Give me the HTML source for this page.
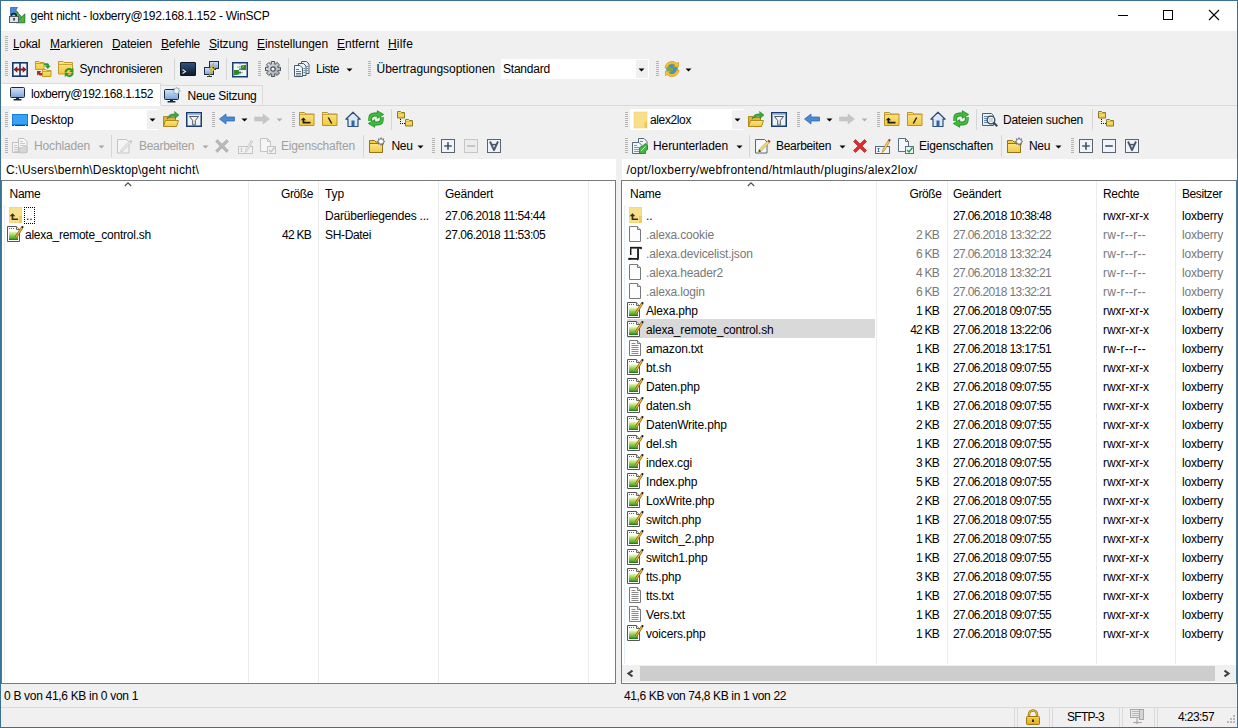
<!DOCTYPE html>
<html><head><meta charset="utf-8"><style>
html,body{margin:0;padding:0;}
body{width:1238px;height:728px;position:relative;overflow:hidden;background:#f0f0f0;font-family:"Liberation Sans",sans-serif;font-size:12px;color:#000;}
.t{position:absolute;white-space:nowrap;line-height:14px;}
svg{overflow:visible}
</style></head><body>
<svg width="0" height="0" style="position:absolute"><defs>
<linearGradient id="gfold" x1="0" y1="0" x2="0" y2="1"><stop offset="0" stop-color="#fbe58a"/><stop offset="1" stop-color="#f3c93c"/></linearGradient>
<linearGradient id="gcons" x1="0" y1="0" x2="0" y2="1"><stop offset="0" stop-color="#2f5580"/><stop offset="1" stop-color="#0d1826"/></linearGradient>
<linearGradient id="gscr" x1="0" y1="0" x2="0" y2="1"><stop offset="0" stop-color="#d6e6f8"/><stop offset="1" stop-color="#7aa4dc"/></linearGradient>
<linearGradient id="ggreen" x1="0" y1="0" x2="0" y2="1"><stop offset="0" stop-color="#c8e8a0"/><stop offset="0.45" stop-color="#7cc850"/><stop offset="1" stop-color="#1f8a1f"/></linearGradient>
<linearGradient id="ggear" x1="0" y1="0" x2="1" y2="1"><stop offset="0" stop-color="#e6e9ee"/><stop offset="1" stop-color="#9aa2ad"/></linearGradient>
<linearGradient id="glock" x1="0" y1="0" x2="0" y2="1"><stop offset="0" stop-color="#f8d860"/><stop offset="1" stop-color="#e0a820"/></linearGradient>
</defs></svg>
<div style="position:absolute;left:0px;top:0px;width:1238px;height:31px;background:#ffffff;"></div>
<svg style="position:absolute;left:9px;top:7px" width="16" height="16" viewBox="0 0 16 16"><path d="M1.5 0.5H8.5L6.8 3.2L9 5.5L6.5 8H1.5z" fill="#4a88e0" stroke="#2a5aa8" stroke-width="0.7"/><path d="M6 5.2L11.5 10.7" stroke="#1e7a1e" stroke-width="3.6"/><path d="M6 5.2L11.5 10.7" stroke="#4cbc4c" stroke-width="2.2"/><path d="M15.8 6.8V15.8H7.2z" fill="#46b446" stroke="#1e7a1e" stroke-width="0.9" stroke-linejoin="round"/><path d="M2.3 10.5V9a2.5 2.5 0 0 1 5 0v1.5" stroke="#0e2438" stroke-width="1.7" fill="none"/><rect x="0.5" y="9.5" width="9" height="6" fill="#dfe4ea" stroke="#555a60"/><rect x="4.3" y="11" width="1.5" height="2.5" fill="#222"/></svg>
<div class="t" style="left:30.50px;top:9.00px;letter-spacing:-0.257px;">geht nicht - loxberry@192.168.1.152 - WinSCP</div>
<div style="position:absolute;left:1118px;top:15px;width:10px;height:1px;background:#000;"></div>
<div style="position:absolute;left:1163px;top:10px;width:8px;height:8px;border:1px solid #000"></div>
<svg style="position:absolute;left:1209px;top:10px" width="10" height="10" viewBox="0 0 10 10"><path d="M0 0L10 10M10 0L0 10" stroke="#000" stroke-width="1.1"/></svg>
<div style="position:absolute;left:5px;top:36px;width:3px;height:15px;background:repeating-linear-gradient(#b4b4b4 0 1px,transparent 1px 2px)"></div>
<div class="t" style="left:13.00px;top:36.50px;letter-spacing:-0.338px;">Lokal</div>
<div style="position:absolute;left:13px;top:49px;width:6px;height:1px;background:#000;"></div>
<div class="t" style="left:50.00px;top:36.50px;letter-spacing:-0.039px;">Markieren</div>
<div style="position:absolute;left:50px;top:49px;width:10px;height:1px;background:#000;"></div>
<div class="t" style="left:112.00px;top:36.50px;letter-spacing:-0.194px;">Dateien</div>
<div style="position:absolute;left:112px;top:49px;width:8px;height:1px;background:#000;"></div>
<div class="t" style="left:161.00px;top:36.50px;letter-spacing:-0.243px;">Befehle</div>
<div style="position:absolute;left:161px;top:49px;width:8px;height:1px;background:#000;"></div>
<div class="t" style="left:209.00px;top:36.50px;letter-spacing:-0.146px;">Sitzung</div>
<div style="position:absolute;left:209px;top:49px;width:8px;height:1px;background:#000;"></div>
<div class="t" style="left:257.00px;top:36.50px;letter-spacing:-0.081px;">Einstellungen</div>
<div style="position:absolute;left:257px;top:49px;width:8px;height:1px;background:#000;"></div>
<div class="t" style="left:337.00px;top:36.50px;letter-spacing:-0.003px;">Entfernt</div>
<div style="position:absolute;left:337px;top:49px;width:8px;height:1px;background:#000;"></div>
<div class="t" style="left:388.00px;top:36.50px;letter-spacing:0.199px;">Hilfe</div>
<div style="position:absolute;left:388px;top:49px;width:9px;height:1px;background:#000;"></div>
<div style="position:absolute;left:5px;top:61px;width:3px;height:15px;background:repeating-linear-gradient(#b4b4b4 0 1px,transparent 1px 2px)"></div>
<svg style="position:absolute;left:12px;top:62px" width="16" height="16" viewBox="0 0 16 16"><rect x="0.8" y="0.8" width="14.4" height="13.4" fill="#eef4fb" stroke="#1a3866" stroke-width="1.6"/><rect x="7.2" y="0.5" width="1.6" height="14" fill="#1a3866"/><path d="M1.5 7.5l3.8-3.3v2.3h5.4V4.2l3.8 3.3-3.8 3.3V8.5H5.3v2.3z" fill="#8a1c1c"/></svg>
<svg style="position:absolute;left:35px;top:61px" width="16" height="16" viewBox="0 0 16 16"><path d="M0.5 0.5h3.5l1 1h4v7h-8.5z" fill="url(#gfold)" stroke="#c19a2a"/><path d="M0.5 2.5h8.5" stroke="#c9a43a"/><path d="M7.5 8.5h3.5l1 1h4v6h-8.5z" fill="url(#gfold)" stroke="#c19a2a"/><path d="M7.5 10.5h8.5" stroke="#c9a43a"/><path d="M9 2.2h3.2c1.2 0 1.8.6 1.8 1.8v.8h1.8l-3 3.2-3-3.2h1.8v-.6h-2.6z" fill="#2f9a2f"/><path d="M7 14.5H4.5L3.2 13.2 2 14.4V10h4.4L5 11.3l.8.8H7z" fill="#b3262a"/></svg>
<svg style="position:absolute;left:58px;top:61px" width="16" height="16" viewBox="0 0 16 16"><path d="M0.5 0.5h4.5l1 1h8.5v11.5h-14z" fill="url(#gfold)" stroke="#c19a2a"/><path d="M0.5 3.5h14" stroke="#c9a43a"/><path d="M6.5 11.5c0-2.6 2-4.5 4.6-4.5 1.3 0 2.3.5 3 1.2l1.4-1.4v4.2h-4.2l1.4-1.4c-.4-.4-1-.7-1.6-.7-1.4 0-2.4 1.1-2.4 2.6z" fill="#2f9a2f"/><path d="M15.8 11.5c0 2.6-2 4.5-4.6 4.5-1.3 0-2.3-.5-3-1.2l-1.4 1.4v-4.2h4.2l-1.4 1.4c.4.4 1 .7 1.6.7 1.4 0 2.4-1.1 2.4-2.6z" fill="#2f9a2f"/></svg>
<div class="t" style="left:79.50px;top:61.50px;letter-spacing:-0.203px;">Synchronisieren</div>
<div style="position:absolute;left:174px;top:58px;width:1px;height:22px;background:#d6d6d6;"></div>
<svg style="position:absolute;left:180px;top:61px" width="16" height="16" viewBox="0 0 16 16"><rect x="0.5" y="1.5" width="15" height="13" rx="0.5" fill="url(#gcons)" stroke="#0d1826"/><path d="M2.5 8.5l3 2-3 2" stroke="#e0e8f0" fill="none" stroke-width="1.1"/></svg>
<svg style="position:absolute;left:203px;top:61px" width="16" height="16" viewBox="0 0 16 16"><rect x="6.5" y="0.5" width="9" height="7" fill="url(#gscr)" stroke="#1f2f44"/><path d="M9 8.5h4" stroke="#1f2f44"/><rect x="1.5" y="6.5" width="9" height="7" fill="url(#gscr)" stroke="#1f2f44"/><path d="M4 15.5h5M6.5 13.5v2" stroke="#1f2f44"/><path d="M11 2l-5 6.5h3l-3.5 7 6.5-8h-3z" fill="#f7d23c" stroke="#b08a10" stroke-width="0.5"/></svg>
<div style="position:absolute;left:226px;top:58px;width:1px;height:22px;background:#d6d6d6;"></div>
<svg style="position:absolute;left:232px;top:62px" width="16" height="16" viewBox="0 0 16 16"><rect x="0.75" y="0.75" width="14.5" height="14" fill="#f2f7fb" stroke="#1b3c6e" stroke-width="1.5"/><path d="M8 1.5v13" stroke="#1b3c6e" stroke-dasharray="1 1.5" stroke-opacity="0.6"/><path d="M5 5h4" stroke="#9ab89a" stroke-width="1.2"/><path d="M9 3.5L14 2.8V8H9z" fill="#2c8a2c"/><path d="M9.5 6L12 4" stroke="#8ad08a" stroke-width="0.8"/><path d="M7 10.5h4" stroke="#9ab89a" stroke-width="1.2"/><path d="M2 8h5v4.5L2 13.2z" fill="#2c8a2c"/><rect x="7.5" y="6.5" width="1" height="1.5" fill="#0a1a2a"/><rect x="7.5" y="10" width="1" height="1.5" fill="#0a1a2a"/></svg>
<div style="position:absolute;left:258px;top:61px;width:3px;height:15px;background:repeating-linear-gradient(#b4b4b4 0 1px,transparent 1px 2px)"></div>
<svg style="position:absolute;left:265px;top:61px" width="16" height="16" viewBox="0 0 16 16"><path d="M6.24 3.32 L6.32 0.49 L9.68 0.49 L9.76 3.32 L10.06 3.45 L12.13 1.50 L14.50 3.87 L12.55 5.94 L12.68 6.24 L15.51 6.32 L15.51 9.68 L12.68 9.76 L12.55 10.06 L14.50 12.13 L12.13 14.50 L10.06 12.55 L9.76 12.68 L9.68 15.51 L6.32 15.51 L6.24 12.68 L5.94 12.55 L3.87 14.50 L1.50 12.13 L3.45 10.06 L3.32 9.76 L0.49 9.68 L0.49 6.32 L3.32 6.24 L3.45 5.94 L1.50 3.87 L3.87 1.50 L5.94 3.45Z" fill="url(#ggear)" stroke="#4a5058" stroke-width="1" stroke-linejoin="round"/><circle cx="8" cy="8" r="2.2" fill="#fafafa" stroke="#4a5058" stroke-width="1.2"/></svg>
<div style="position:absolute;left:288px;top:58px;width:1px;height:22px;background:#d6d6d6;"></div>
<svg style="position:absolute;left:294px;top:61px" width="16" height="16" viewBox="0 0 16 16"><path d="M7.5 0.5h5l2.5 2.5v9.5h-7.5z" fill="#e8f2fa" stroke="#4a5a6a"/><path d="M12.5 5.5h1.5M12.5 7.5h1.5M12.5 9.5h1.5" stroke="#6a8aa8"/><path d="M4.5 2.5h5l2.5 2.5v9.5h-7.5z" fill="#e8f2fa" stroke="#4a5a6a"/><path d="M9.5 7.5h1.5M9.5 9.5h1.5M9.5 11.5h1.5" stroke="#6a8aa8"/><path d="M0.5 4.5h5.5l2.5 2.5v8.5h-8z" fill="#f0f6fc" stroke="#4a5a6a"/><path d="M2 8.5h3M2 10.5h5M2 12.5h5M2 14h5" stroke="#5a7a9a"/></svg>
<div class="t" style="left:316.00px;top:61.50px;letter-spacing:-0.470px;">Liste</div>
<svg style="position:absolute;left:346px;top:68px" width="7" height="4" viewBox="0 0 7 4"><path d="M0.5 0.5h6l-3 3z" fill="#000"/></svg>
<div style="position:absolute;left:368px;top:61px;width:3px;height:15px;background:repeating-linear-gradient(#b4b4b4 0 1px,transparent 1px 2px)"></div>
<div class="t" style="left:376.50px;top:61.50px;letter-spacing:-0.013px;">Übertragungsoptionen</div>
<div style="position:absolute;left:501px;top:59px;width:148px;height:20px;background:#ffffff;"></div>
<div style="position:absolute;left:636px;top:60px;width:12px;height:18px;background:#f0f0f0;"></div>
<div class="t" style="left:503.00px;top:61.50px;letter-spacing:-0.213px;">Standard</div>
<svg style="position:absolute;left:638px;top:68px" width="7" height="4" viewBox="0 0 7 4"><path d="M0.5 0.5h6l-3 3z" fill="#000"/></svg>
<div style="position:absolute;left:656px;top:61px;width:3px;height:15px;background:repeating-linear-gradient(#b4b4b4 0 1px,transparent 1px 2px)"></div>
<svg style="position:absolute;left:664px;top:61px" width="16" height="16" viewBox="0 0 16 16"><circle cx="8" cy="8" r="5.8" fill="#4a90c8"/><path d="M4 5c2 0 2 2 4 2s1 3 0 3-2 1-2 3c-2-1-3-3-3-5z" fill="#6ab04c"/><path d="M9 3c1 1 3 1 3 3" stroke="#6ab04c" stroke-width="1.5" fill="none"/><path d="M1 7a7 7 0 0 1 12-4.5l1.5-1.5v5h-5l1.7-1.7A4.6 4.6 0 0 0 3.4 7z" fill="#f3c23a" stroke="#b8860b" stroke-width="0.5"/><path d="M15 9a7 7 0 0 1-12 4.5l-1.5 1.5v-5h5l-1.7 1.7A4.6 4.6 0 0 0 12.6 9z" fill="#f3c23a" stroke="#b8860b" stroke-width="0.5"/></svg>
<svg style="position:absolute;left:685px;top:68px" width="7" height="4" viewBox="0 0 7 4"><path d="M0.5 0.5h6l-3 3z" fill="#000"/></svg>
<div style="position:absolute;left:2px;top:83px;width:159px;height:1px;background:#d9d9d9;"></div>
<div style="position:absolute;left:160px;top:83px;width:1px;height:22px;background:#d9d9d9;"></div>
<div style="position:absolute;left:1px;top:84px;width:159px;height:22px;background:#ffffff;"></div>
<svg style="position:absolute;left:10px;top:87px" width="16" height="16" viewBox="0 0 16 16"><rect x="0.5" y="0.5" width="14" height="10" rx="1" fill="url(#gscr)" stroke="#1c2836"/><path d="M1 6c4-1.5 9 0 13-1.5" stroke="#a8c8f0" fill="none"/><rect x="6" y="11" width="3" height="1.5" fill="#1c2836"/><rect x="3.5" y="12" width="8" height="1.5" rx="0.5" fill="#1c2836"/></svg>
<div class="t" style="left:31.00px;top:87.00px;letter-spacing:-0.436px;">loxberry@192.168.1.152</div>
<div style="position:absolute;left:161px;top:85px;width:102px;height:21px;background:#f2f2f2;box-sizing:border-box;border:1px solid #dadada;border-left:none;border-bottom:none"></div>
<svg style="position:absolute;left:164px;top:87px" width="16" height="16" viewBox="0 0 16 16"><g transform="translate(0,2)"><rect x="0.5" y="0.5" width="14" height="10" rx="1" fill="url(#gscr)" stroke="#1c2836"/><path d="M1 6c4-1.5 9 0 13-1.5" stroke="#a8c8f0" fill="none"/><rect x="6" y="11" width="3" height="1.5" fill="#1c2836"/><rect x="3.5" y="12" width="8" height="1.5" rx="0.5" fill="#1c2836"/></g><path d="M12.5 0l0.8 1.8 1.9-.6-.6 1.9 1.8.8-1.8.8.6 1.9-1.9-.6-.8 1.8-.8-1.8-1.9.6.6-1.9-1.8-.8 1.8-.8-.6-1.9 1.9.6z" fill="#e8f2fb" stroke="#7a9ab8" stroke-width="0.6"/></svg>
<div class="t" style="left:187.50px;top:88.80px;letter-spacing:-0.254px;">Neue Sitzung</div>
<div style="position:absolute;left:161px;top:105px;width:1076px;height:1px;background:#d9d9d9;"></div>
<div style="position:absolute;left:5px;top:112px;width:3px;height:15px;background:repeating-linear-gradient(#b4b4b4 0 1px,transparent 1px 2px)"></div>
<div style="position:absolute;left:10px;top:109px;width:148px;height:21px;background:#ffffff;"></div>
<div style="position:absolute;left:147px;top:110px;width:11px;height:19px;background:#f0f0f0;"></div>
<svg style="position:absolute;left:12px;top:114px" width="16" height="12" viewBox="0 0 16 12"><rect x="0" y="0" width="16" height="12" fill="#1a7fd8"/><rect x="1" y="1" width="14" height="9" fill="#3aa0f0"/><rect x="0" y="11" width="16" height="1" fill="#0a4a98"/><rect x="2" y="11" width="1" height="1" fill="#9ad0ff"/><rect x="13" y="11" width="1" height="1" fill="#9ad0ff"/></svg>
<div class="t" style="left:30.50px;top:113.00px;letter-spacing:-0.146px;">Desktop</div>
<svg style="position:absolute;left:149px;top:118px" width="7" height="4" viewBox="0 0 7 4"><path d="M0.5 0.5h6l-3 3z" fill="#000"/></svg>
<svg style="position:absolute;left:163px;top:111px" width="16" height="16" viewBox="0 0 16 16"><path d="M0.5 5.5h4l1 1h7v9h-12z" fill="#e2b43a" stroke="#b08a1a"/><path d="M2.5 9.5h13l-2 6h-13z" fill="url(#gfold)" stroke="#b08a1a"/><path d="M4 8c1-4 4-5.5 8-5l-0.5-2.5 4.5 3.5-4 3.5 0-2c-3-.5-5.5 .5-8 2.5z" fill="#3ca83c" stroke="#1f7a1f" stroke-width="0.5"/></svg>
<svg style="position:absolute;left:186px;top:111px" width="16" height="16" viewBox="0 0 16 16"><rect x="0.75" y="1.75" width="14.5" height="13.5" fill="#eaf2fa" stroke="#1b3c6e" stroke-width="1.5"/><rect x="1.5" y="2.5" width="13" height="1.5" fill="#9ab8dc"/><path d="M3.5 5.5h9l-3.2 4v4.5h-2.6v-4.5z" fill="#f4f4f4" stroke="#55595e" stroke-width="1"/></svg>
<div style="position:absolute;left:212px;top:112px;width:3px;height:15px;background:repeating-linear-gradient(#b4b4b4 0 1px,transparent 1px 2px)"></div>
<svg style="position:absolute;left:219px;top:111px" width="16" height="16" viewBox="0 0 16 16"><path d="M0.5 8l6.5-5v3h8.5v4H7v3z" fill="#4a8ad8" stroke="#2a5ea8" stroke-width="0.7" stroke-linejoin="round"/></svg>
<svg style="position:absolute;left:241px;top:118px" width="7" height="4" viewBox="0 0 7 4"><path d="M0.5 0.5h6l-3 3z" fill="#000"/></svg>
<svg style="position:absolute;left:254px;top:111px" width="16" height="16" viewBox="0 0 16 16"><path d="M15.5 8L9 3v3H0.5v4H9v3z" fill="#c6c6c6" stroke="#bdbdbd" stroke-width="0.5"/></svg>
<svg style="position:absolute;left:276px;top:118px" width="7" height="4" viewBox="0 0 7 4"><path d="M0.5 0.5h6l-3 3z" fill="#b0b0b0"/></svg>
<div style="position:absolute;left:292px;top:112px;width:3px;height:15px;background:repeating-linear-gradient(#b4b4b4 0 1px,transparent 1px 2px)"></div>
<svg style="position:absolute;left:299px;top:111px" width="16" height="16" viewBox="0 0 16 16"><path d="M0.5 1.5h5l1.5 1.5h8v11.5h-14.5z" fill="url(#gfold)" stroke="#b8922a"/><path d="M0.5 3.5h15" stroke="#c9a43a"/><path d="M4.5 6.5l-2.8 2.8h1.8v3.2h8v-1.8h-6.2v-1.4h1.8z" fill="#1e1e1e"/></svg>
<svg style="position:absolute;left:322px;top:111px" width="16" height="16" viewBox="0 0 16 16"><path d="M0.5 1.5h5l1.5 1.5h8v11.5h-14.5z" fill="url(#gfold)" stroke="#b8922a"/><path d="M0.5 3.5h15" stroke="#c9a43a"/><path d="M6.3 6.5l3.4 6" stroke="#1e1e1e" stroke-width="1.5"/></svg>
<svg style="position:absolute;left:345px;top:111px" width="16" height="16" viewBox="0 0 16 16"><path d="M8 1.2L0.8 8.2h2.2v7.3h10v-7.3h2.2z" fill="#dce8f6" stroke="#334e72" stroke-width="1.2" stroke-linejoin="round"/><rect x="6.5" y="9.5" width="3" height="6" fill="#2f62b0"/></svg>
<svg style="position:absolute;left:368px;top:111px" width="16" height="16" viewBox="0 0 16 16"><path d="M2.2 10V7.8c0-2.6 1.6-4.3 4.3-4.3h3.5" stroke="#1f8a1f" stroke-width="3.8" fill="none"/><path d="M9.3 -0.3L15.7 3.5 9.3 7.3z" fill="#3cba3c" stroke="#1f8a1f" stroke-width="0.8" stroke-linejoin="round"/><path d="M2.2 10V7.8c0-2.6 1.6-4.3 4.3-4.3h3.5" stroke="#44c044" stroke-width="2.2" fill="none"/><path d="M13.8 6V8.2c0 2.6-1.6 4.3-4.3 4.3H6" stroke="#1f8a1f" stroke-width="3.8" fill="none"/><path d="M6.7 8.7L0.3 12.5 6.7 16.3z" fill="#3cba3c" stroke="#1f8a1f" stroke-width="0.8" stroke-linejoin="round"/><path d="M13.8 6V8.2c0 2.6-1.6 4.3-4.3 4.3H6" stroke="#44c044" stroke-width="2.2" fill="none"/></svg>
<div style="position:absolute;left:391px;top:109px;width:1px;height:21px;background:#d6d6d6;"></div>
<svg style="position:absolute;left:397px;top:111px" width="16" height="16" viewBox="0 0 16 16"><path d="M0.5 0.5h3l1 1h3v5.5h-7z" fill="url(#gfold)" stroke="#8a7a20"/><path d="M0.5 2.5h7" stroke="#c0a030" stroke-width="0.6"/><path d="M8.5 8.5h3l1 1h3v5.5h-7z" fill="url(#gfold)" stroke="#8a7a20"/><path d="M8.5 10.5h7" stroke="#c0a030" stroke-width="0.6"/><g fill="#111"><rect x="3" y="8" width="1" height="1"/><rect x="3" y="10" width="1" height="1"/><rect x="3" y="12" width="1" height="1"/><rect x="5" y="12" width="1" height="1"/><rect x="7" y="12" width="1" height="1"/></g></svg>
<div style="position:absolute;left:5px;top:138px;width:3px;height:15px;background:repeating-linear-gradient(#b4b4b4 0 1px,transparent 1px 2px)"></div>
<svg style="position:absolute;left:12px;top:138px" width="16" height="16" viewBox="0 0 16 16"><path d="M6.5 0.5h5.5l3 3v11h-8.5z" fill="#f6f6f6" stroke="#c0c0c0"/><path d="M8 3.5h3M8 5.5h5M8 7.5h5" stroke="#c8c8c8"/><path d="M0.5 4.5h6l0 0v10h-6z" fill="#f6f6f6" stroke="#c0c0c0"/><path d="M2 7.5h3M2 9.5h4M2 11.5h4M2 13.5h4" stroke="#c8c8c8"/><path d="M7.5 9.5h3l3-2 1.5 2v4l-2 1.5h-5.5z" fill="#d6d6d6" stroke="#bcbcbc" stroke-width="0.7"/></svg>
<div class="t" style="left:34.00px;top:139.00px;letter-spacing:-0.153px;color:#a0a0a0;">Hochladen</div>
<svg style="position:absolute;left:98px;top:145px" width="7" height="4" viewBox="0 0 7 4"><path d="M0.5 0.5h6l-3 3z" fill="#a8a8a8"/></svg>
<div style="position:absolute;left:111px;top:135px;width:1px;height:22px;background:#d6d6d6;"></div>
<svg style="position:absolute;left:117px;top:138px" width="16" height="16" viewBox="0 0 16 16"><path d="M0.5 1.5h9l2.5 2.5v11h-11.5z" fill="#f4f4f4" stroke="#c4c4c4"/><path d="M3.5 14l0.8-2.6 8.2-8.4 1.9 1.8-8.2 8.4z" fill="#e4e4e4" stroke="#bcbcbc" stroke-width="0.5"/><path d="M12.5 3l1.2-1.2 1.9 1.8-1.2 1.2z" fill="#c8c8c8"/></svg>
<div class="t" style="left:139.00px;top:139.00px;letter-spacing:-0.304px;color:#a0a0a0;">Bearbeiten</div>
<svg style="position:absolute;left:202px;top:145px" width="7" height="4" viewBox="0 0 7 4"><path d="M0.5 0.5h6l-3 3z" fill="#a8a8a8"/></svg>
<svg style="position:absolute;left:214px;top:138px" width="16" height="16" viewBox="0 0 16 16"><path d="M1.5 3.5l2-2 4.5 4.5 4.5-4.5 2 2-4.5 4.5 4.5 4.5-2 2-4.5-4.5-4.5 4.5-2-2 4.5-4.5z" fill="#b8b8b8" stroke="#a8a8a8" stroke-width="0.5"/></svg>
<svg style="position:absolute;left:237px;top:138px" width="16" height="16" viewBox="0 0 16 16"><rect x="1.5" y="8.5" width="14" height="7" fill="#f2f2f2" stroke="#c4c4c4"/><path d="M3.5 10.5h2M3.5 13.5h2M4.5 10.5v3" stroke="#c4c4c4" stroke-width="0.9"/><path d="M8.2 14.5L8.8 11.5 14 2.5 15.8 3.5 10.6 12.5z" fill="#e4e4e4" stroke="#bcbcbc" stroke-width="0.6"/></svg>
<svg style="position:absolute;left:260px;top:138px" width="16" height="16" viewBox="0 0 16 16"><path d="M0.5 0.5h7l3 3v10h-10z" fill="#f6f6f6" stroke="#c4c4c4"/><path d="M7.5 0.5v3h3" fill="none" stroke="#c4c4c4"/><rect x="7.5" y="8.5" width="8" height="7" fill="#f2f2f2" stroke="#c4c4c4"/><path d="M9 12l2 2 3.5-4.5" stroke="#c4c4c4" stroke-width="1.4" fill="none"/></svg>
<div class="t" style="left:281.00px;top:139.00px;letter-spacing:-0.158px;color:#a0a0a0;">Eigenschaften</div>
<div style="position:absolute;left:363px;top:135px;width:1px;height:22px;background:#d6d6d6;"></div>
<svg style="position:absolute;left:369px;top:137px" width="16" height="16" viewBox="0 0 16 16"><path d="M0.5 3.5h5l1.5 1.5h6.5v10.5h-13z" fill="#f2d048" stroke="#8f7420"/><path d="M0.5 6.5h13v9h-13z" fill="url(#gfold)" stroke="#8f7420"/><path d="M12 0.6l0.8 1.8 1.9-.6-.6 1.9 1.8.8-1.8.8.6 1.9-1.9-.6-.8 1.8-.8-1.8-1.9.6.6-1.9-1.8-.8 1.8-.8-.6-1.9 1.9.6z" fill="#eef2f6" stroke="#5a6470" stroke-width="0.8"/><circle cx="12" cy="4.2" r="1.2" fill="#fff"/></svg>
<div class="t" style="left:391.50px;top:139.00px;letter-spacing:-0.338px;">Neu</div>
<svg style="position:absolute;left:417px;top:145px" width="7" height="4" viewBox="0 0 7 4"><path d="M0.5 0.5h6l-3 3z" fill="#000"/></svg>
<div style="position:absolute;left:432px;top:138px;width:3px;height:15px;background:repeating-linear-gradient(#b4b4b4 0 1px,transparent 1px 2px)"></div>
<svg style="position:absolute;left:441px;top:139px" width="14" height="14" viewBox="0 0 14 14"><rect x="0.5" y="0.5" width="13" height="13" fill="#eef4fa" stroke="#5a6470"/><path d="M7 3.2v7.6M3.2 7h7.6" stroke="#4a5868" stroke-width="1.7"/></svg>
<svg style="position:absolute;left:464px;top:139px" width="14" height="14" viewBox="0 0 14 14"><rect x="0.5" y="0.5" width="13" height="13" fill="#ececec" stroke="#c6c6c6"/><path d="M3 7h8" stroke="#c6c6c6" stroke-width="2"/></svg>
<svg style="position:absolute;left:487px;top:139px" width="14" height="14" viewBox="0 0 14 14"><rect x="0.5" y="0.5" width="13" height="13" fill="#eef4fa" stroke="#5a6470"/><path d="M3 2.5L7 11.2 11 2.5" fill="none" stroke="#4a5868" stroke-width="1.9" stroke-linejoin="round"/><path d="M4.4 5.6h5.2" stroke="#4a5868" stroke-width="1.5"/></svg>
<div style="position:absolute;left:625px;top:112px;width:3px;height:15px;background:repeating-linear-gradient(#b4b4b4 0 1px,transparent 1px 2px)"></div>
<div style="position:absolute;left:630px;top:109px;width:114px;height:21px;background:#ffffff;"></div>
<div style="position:absolute;left:732px;top:110px;width:12px;height:19px;background:#f0f0f0;"></div>
<svg style="position:absolute;left:634px;top:112px" width="13" height="16" viewBox="0 0 13 16"><rect x="0" y="0" width="13" height="16" fill="#f9df8a"/><rect x="0" y="0" width="13" height="16" fill="none" stroke="#f0d070" stroke-width="0.6"/><rect x="10.5" y="10" width="2.5" height="6" fill="#f0c850"/></svg>
<div class="t" style="left:650.00px;top:113.00px;letter-spacing:-0.378px;">alex2lox</div>
<svg style="position:absolute;left:734px;top:118px" width="7" height="4" viewBox="0 0 7 4"><path d="M0.5 0.5h6l-3 3z" fill="#000"/></svg>
<svg style="position:absolute;left:748px;top:111px" width="16" height="16" viewBox="0 0 16 16"><path d="M0.5 5.5h4l1 1h7v9h-12z" fill="#e2b43a" stroke="#b08a1a"/><path d="M2.5 9.5h13l-2 6h-13z" fill="url(#gfold)" stroke="#b08a1a"/><path d="M4 8c1-4 4-5.5 8-5l-0.5-2.5 4.5 3.5-4 3.5 0-2c-3-.5-5.5 .5-8 2.5z" fill="#3ca83c" stroke="#1f7a1f" stroke-width="0.5"/></svg>
<svg style="position:absolute;left:771px;top:111px" width="16" height="16" viewBox="0 0 16 16"><rect x="0.75" y="1.75" width="14.5" height="13.5" fill="#eaf2fa" stroke="#1b3c6e" stroke-width="1.5"/><rect x="1.5" y="2.5" width="13" height="1.5" fill="#9ab8dc"/><path d="M3.5 5.5h9l-3.2 4v4.5h-2.6v-4.5z" fill="#f4f4f4" stroke="#55595e" stroke-width="1"/></svg>
<div style="position:absolute;left:797px;top:112px;width:3px;height:15px;background:repeating-linear-gradient(#b4b4b4 0 1px,transparent 1px 2px)"></div>
<svg style="position:absolute;left:804px;top:111px" width="16" height="16" viewBox="0 0 16 16"><path d="M0.5 8l6.5-5v3h8.5v4H7v3z" fill="#4a8ad8" stroke="#2a5ea8" stroke-width="0.7" stroke-linejoin="round"/></svg>
<svg style="position:absolute;left:826px;top:118px" width="7" height="4" viewBox="0 0 7 4"><path d="M0.5 0.5h6l-3 3z" fill="#000"/></svg>
<svg style="position:absolute;left:839px;top:111px" width="16" height="16" viewBox="0 0 16 16"><path d="M15.5 8L9 3v3H0.5v4H9v3z" fill="#c6c6c6" stroke="#bdbdbd" stroke-width="0.5"/></svg>
<svg style="position:absolute;left:861px;top:118px" width="7" height="4" viewBox="0 0 7 4"><path d="M0.5 0.5h6l-3 3z" fill="#b0b0b0"/></svg>
<div style="position:absolute;left:877px;top:112px;width:3px;height:15px;background:repeating-linear-gradient(#b4b4b4 0 1px,transparent 1px 2px)"></div>
<svg style="position:absolute;left:884px;top:111px" width="16" height="16" viewBox="0 0 16 16"><path d="M0.5 1.5h5l1.5 1.5h8v11.5h-14.5z" fill="url(#gfold)" stroke="#b8922a"/><path d="M0.5 3.5h15" stroke="#c9a43a"/><path d="M4.5 6.5l-2.8 2.8h1.8v3.2h8v-1.8h-6.2v-1.4h1.8z" fill="#1e1e1e"/></svg>
<svg style="position:absolute;left:907px;top:111px" width="16" height="16" viewBox="0 0 16 16"><path d="M0.5 1.5h5l1.5 1.5h8v11.5h-14.5z" fill="url(#gfold)" stroke="#b8922a"/><path d="M0.5 3.5h15" stroke="#c9a43a"/><path d="M9.7 6.5l-3.4 6" stroke="#1e1e1e" stroke-width="1.5"/></svg>
<svg style="position:absolute;left:930px;top:111px" width="16" height="16" viewBox="0 0 16 16"><path d="M8 1.2L0.8 8.2h2.2v7.3h10v-7.3h2.2z" fill="#dce8f6" stroke="#334e72" stroke-width="1.2" stroke-linejoin="round"/><rect x="6.5" y="9.5" width="3" height="6" fill="#2f62b0"/></svg>
<svg style="position:absolute;left:953px;top:111px" width="16" height="16" viewBox="0 0 16 16"><path d="M2.2 10V7.8c0-2.6 1.6-4.3 4.3-4.3h3.5" stroke="#1f8a1f" stroke-width="3.8" fill="none"/><path d="M9.3 -0.3L15.7 3.5 9.3 7.3z" fill="#3cba3c" stroke="#1f8a1f" stroke-width="0.8" stroke-linejoin="round"/><path d="M2.2 10V7.8c0-2.6 1.6-4.3 4.3-4.3h3.5" stroke="#44c044" stroke-width="2.2" fill="none"/><path d="M13.8 6V8.2c0 2.6-1.6 4.3-4.3 4.3H6" stroke="#1f8a1f" stroke-width="3.8" fill="none"/><path d="M6.7 8.7L0.3 12.5 6.7 16.3z" fill="#3cba3c" stroke="#1f8a1f" stroke-width="0.8" stroke-linejoin="round"/><path d="M13.8 6V8.2c0 2.6-1.6 4.3-4.3 4.3H6" stroke="#44c044" stroke-width="2.2" fill="none"/></svg>
<div style="position:absolute;left:976px;top:109px;width:1px;height:21px;background:#d6d6d6;"></div>
<svg style="position:absolute;left:982px;top:111px" width="16" height="16" viewBox="0 0 16 16"><path d="M0.5 2.5h9l2 2v10h-11z" fill="#e8f0f8" stroke="#4a6078"/><path d="M2 5.5h5M2 7.5h4M2 9.5h4M2 11.5h5" stroke="#6a8aa8"/><circle cx="9" cy="9" r="3.8" fill="#f4f8fc" stroke="#33465a" stroke-width="1.3"/><path d="M7 8h4M7 10h4" stroke="#8aa0b8" stroke-width="0.8"/><path d="M11.5 11.5l3.8 3.8" stroke="#33465a" stroke-width="2"/></svg>
<div class="t" style="left:1003.00px;top:113.00px;letter-spacing:-0.242px;">Dateien suchen</div>
<div style="position:absolute;left:1092px;top:109px;width:1px;height:21px;background:#d6d6d6;"></div>
<svg style="position:absolute;left:1098px;top:111px" width="16" height="16" viewBox="0 0 16 16"><path d="M0.5 0.5h3l1 1h3v5.5h-7z" fill="url(#gfold)" stroke="#8a7a20"/><path d="M0.5 2.5h7" stroke="#c0a030" stroke-width="0.6"/><path d="M8.5 8.5h3l1 1h3v5.5h-7z" fill="url(#gfold)" stroke="#8a7a20"/><path d="M8.5 10.5h7" stroke="#c0a030" stroke-width="0.6"/><g fill="#111"><rect x="3" y="8" width="1" height="1"/><rect x="3" y="10" width="1" height="1"/><rect x="3" y="12" width="1" height="1"/><rect x="5" y="12" width="1" height="1"/><rect x="7" y="12" width="1" height="1"/></g></svg>
<div style="position:absolute;left:625px;top:138px;width:3px;height:15px;background:repeating-linear-gradient(#b4b4b4 0 1px,transparent 1px 2px)"></div>
<svg style="position:absolute;left:632px;top:138px" width="16" height="16" viewBox="0 0 16 16"><path d="M6.5 0.5h5.5l3 3v8h-8.5z" fill="#f0f6fb" stroke="#56687a"/><path d="M8 3.5h3" stroke="#6a8aaa"/><path d="M0.5 4.5h6.5l3 3v8h-9.5z" fill="#f0f6fb" stroke="#56687a"/><path d="M2 7.5h3M2 9.5h5M2 11.5h5M2 13.5h5" stroke="#7a9ab8"/><path d="M7.5 9.5l3-1.5 3-2.5 2 2v4l-2 1.5v2.5h-6z" fill="#46b646" stroke="#1e7a2a" stroke-width="0.8" stroke-linejoin="round"/><path d="M9 13l4.5-4.5" stroke="#b8f0a0" stroke-width="1"/></svg>
<div class="t" style="left:653.00px;top:139.00px;letter-spacing:-0.081px;">Herunterladen</div>
<svg style="position:absolute;left:736px;top:145px" width="7" height="4" viewBox="0 0 7 4"><path d="M0.5 0.5h6l-3 3z" fill="#000"/></svg>
<div style="position:absolute;left:749px;top:135px;width:1px;height:22px;background:#d6d6d6;"></div>
<svg style="position:absolute;left:755px;top:138px" width="16" height="16" viewBox="0 0 16 16"><path d="M0.5 1.5h9l2.5 2.5v11h-11.5z" fill="#f4f8fc" stroke="#56687a"/><path d="M3.5 14l0.8-2.6 8.2-8.4 1.9 1.8-8.2 8.4z" fill="#f2d67a" stroke="#b08a30" stroke-width="0.5"/><path d="M3.5 14l0.8-2.6 1.9 1.8z" fill="#333"/><path d="M12.5 3l1.2-1.2 1.9 1.8-1.2 1.2z" fill="#8a3a30"/></svg>
<div class="t" style="left:776.00px;top:139.00px;letter-spacing:-0.304px;">Bearbeiten</div>
<svg style="position:absolute;left:839px;top:145px" width="7" height="4" viewBox="0 0 7 4"><path d="M0.5 0.5h6l-3 3z" fill="#000"/></svg>
<svg style="position:absolute;left:852px;top:138px" width="16" height="16" viewBox="0 0 16 16"><path d="M1.5 3.5l2-2 4.5 4.5 4.5-4.5 2 2-4.5 4.5 4.5 4.5-2 2-4.5-4.5-4.5 4.5-2-2 4.5-4.5z" fill="#e02a2a" stroke="#a01818" stroke-width="0.6"/></svg>
<svg style="position:absolute;left:874px;top:138px" width="16" height="16" viewBox="0 0 16 16"><rect x="1.5" y="8.5" width="14" height="7" fill="#eef4fa" stroke="#56687a"/><path d="M3.5 10.5h2M3.5 13.5h2M4.5 10.5v3" stroke="#3a6a8a" stroke-width="0.9"/><path d="M8.2 14.5L8.8 11.5 14 2.5 15.8 3.5 10.6 12.5z" fill="#f3d060" stroke="#9a7a20" stroke-width="0.6"/><path d="M14 2.5l1-1.8 1.8 1-1 1.8z" fill="#8a3a2a"/></svg>
<svg style="position:absolute;left:898px;top:138px" width="16" height="16" viewBox="0 0 16 16"><path d="M0.5 0.5h7l3 3v10h-10z" fill="#f4f8fc" stroke="#5a6e84"/><path d="M7.5 0.5v3h3" fill="none" stroke="#5a6e84"/><rect x="7.5" y="8.5" width="8" height="7" fill="#eef5fb" stroke="#5a6e84"/><path d="M9 12l2 2 3.5-4.5" stroke="#2a9a3a" stroke-width="1.4" fill="none"/></svg>
<div class="t" style="left:919.00px;top:139.00px;letter-spacing:-0.158px;">Eigenschaften</div>
<div style="position:absolute;left:1001px;top:135px;width:1px;height:22px;background:#d6d6d6;"></div>
<svg style="position:absolute;left:1007px;top:137px" width="16" height="16" viewBox="0 0 16 16"><path d="M0.5 3.5h5l1.5 1.5h6.5v10.5h-13z" fill="#f2d048" stroke="#8f7420"/><path d="M0.5 6.5h13v9h-13z" fill="url(#gfold)" stroke="#8f7420"/><path d="M12 0.6l0.8 1.8 1.9-.6-.6 1.9 1.8.8-1.8.8.6 1.9-1.9-.6-.8 1.8-.8-1.8-1.9.6.6-1.9-1.8-.8 1.8-.8-.6-1.9 1.9.6z" fill="#eef2f6" stroke="#5a6470" stroke-width="0.8"/><circle cx="12" cy="4.2" r="1.2" fill="#fff"/></svg>
<div class="t" style="left:1029.00px;top:139.00px;letter-spacing:-0.338px;">Neu</div>
<svg style="position:absolute;left:1055px;top:145px" width="7" height="4" viewBox="0 0 7 4"><path d="M0.5 0.5h6l-3 3z" fill="#000"/></svg>
<div style="position:absolute;left:1071px;top:138px;width:3px;height:15px;background:repeating-linear-gradient(#b4b4b4 0 1px,transparent 1px 2px)"></div>
<svg style="position:absolute;left:1079px;top:139px" width="14" height="14" viewBox="0 0 14 14"><rect x="0.5" y="0.5" width="13" height="13" fill="#eef4fa" stroke="#5a6470"/><path d="M7 3.2v7.6M3.2 7h7.6" stroke="#4a5868" stroke-width="1.7"/></svg>
<svg style="position:absolute;left:1102px;top:139px" width="14" height="14" viewBox="0 0 14 14"><rect x="0.5" y="0.5" width="13" height="13" fill="#eef4fa" stroke="#5a6470"/><path d="M3.2 7h7.6" stroke="#4a5868" stroke-width="1.7"/></svg>
<svg style="position:absolute;left:1125px;top:139px" width="14" height="14" viewBox="0 0 14 14"><rect x="0.5" y="0.5" width="13" height="13" fill="#eef4fa" stroke="#5a6470"/><path d="M3 2.5L7 11.2 11 2.5" fill="none" stroke="#4a5868" stroke-width="1.9" stroke-linejoin="round"/><path d="M4.4 5.6h5.2" stroke="#4a5868" stroke-width="1.5"/></svg>
<div style="position:absolute;left:1px;top:159px;width:615px;height:21px;background:#ffffff;"></div>
<div class="t" style="left:6.00px;top:163.00px;letter-spacing:0.184px;">C:\Users\bernh\Desktop\geht nicht\</div>
<div style="position:absolute;left:622px;top:159px;width:615px;height:21px;background:#ffffff;"></div>
<div class="t" style="left:626.50px;top:163.00px;letter-spacing:0.273px;">/opt/loxberry/webfrontend/htmlauth/plugins/alex2lox/</div>
<div style="position:absolute;left:1px;top:180px;width:613px;height:502px;border:1px solid #7a7a7a;border-left-color:#4f7894;background:#fff"></div>
<div style="position:absolute;left:248px;top:181px;width:1px;height:502px;background:#ececec;"></div>
<div style="position:absolute;left:318px;top:181px;width:1px;height:502px;background:#ececec;"></div>
<div style="position:absolute;left:438px;top:181px;width:1px;height:502px;background:#ececec;"></div>
<div style="position:absolute;left:588px;top:181px;width:1px;height:502px;background:#ececec;"></div>
<div style="position:absolute;left:4px;top:205px;width:1px;height:477px;background:#e8eef6;"></div>
<svg style="position:absolute;left:124px;top:182px" width="8" height="5" viewBox="0 0 8 5"><path d="M0.8 4L4 0.8L7.2 4" stroke="#505050" stroke-width="1.2" fill="none"/></svg>
<div class="t" style="left:9.50px;top:187.00px;letter-spacing:-0.252px;">Name</div>
<div class="t" style="left:281.00px;top:187.00px;letter-spacing:-0.402px;">Größe</div>
<div class="t" style="left:325.00px;top:187.00px;letter-spacing:-0.114px;">Typ</div>
<div class="t" style="left:445.00px;top:187.00px;letter-spacing:-0.254px;">Geändert</div>
<svg style="position:absolute;left:9px;top:207px" width="13" height="16" viewBox="0 0 13 16"><rect x="0" y="0" width="13" height="16" fill="#f9e08c"/><rect x="0.3" y="0.3" width="12.4" height="15.4" fill="none" stroke="#f0d27a" stroke-width="0.6"/><rect x="10" y="9" width="3" height="7" fill="#f0cc5e"/><path d="M3.5 6.2l-3 3h2.1v3.8h6.4v-1.6h-4.7v-2.2h2.1z" fill="#3a3010"/></svg>
<div class="t" style="left:26.00px;top:209.00px;">..</div>
<div style="position:absolute;left:24px;top:207px;width:11px;height:17px;box-sizing:border-box;border:1px dotted #000"></div>
<div class="t" style="left:325.00px;top:209.00px;letter-spacing:-0.203px;">Darüberliegendes ...</div>
<div class="t" style="left:445.00px;top:209.00px;letter-spacing:-0.477px;">27.06.2018  11:54:44</div>
<svg style="position:absolute;left:7px;top:226px" width="16" height="16" viewBox="0 0 16 16"><path d="M0.5 0.5h9l3 3v12h-12z" fill="#fdfdfd" stroke="#555"/><path d="M9.5 0.5v3h3" fill="#e8e8e8" stroke="#666"/><g fill="#666"><rect x="2" y="2" width="1" height="1"/><rect x="4" y="2" width="1" height="1"/><rect x="6" y="2" width="1" height="1"/></g><linearGradient id="gg3" x1="0" y1="0" x2="0" y2="1"><stop offset="0" stop-color="#f2f8c8"/><stop offset="0.35" stop-color="#a8dc60"/><stop offset="0.8" stop-color="#50a830"/><stop offset="1" stop-color="#186818"/></linearGradient><rect x="2" y="5.5" width="9" height="8.5" fill="url(#gg3)"/><path d="M8.8 11.5L15.3 1.2" stroke="#7a5010" stroke-width="2.4"/><path d="M8.8 11.5L15.3 1.2" stroke="#e8b838" stroke-width="1.4"/><circle cx="15.5" cy="1" r="1" fill="#111"/></svg>
<div class="t" style="left:25.00px;top:228.00px;letter-spacing:-0.235px;">alexa_remote_control.sh</div>
<div class="t" style="left:282.00px;top:228.00px;letter-spacing:-0.738px;">42 KB</div>
<div class="t" style="left:325.00px;top:228.00px;letter-spacing:-0.335px;">SH-Datei</div>
<div class="t" style="left:445.00px;top:228.00px;letter-spacing:-0.477px;">27.06.2018  11:53:05</div>
<div style="position:absolute;left:621px;top:180px;width:614px;height:502px;border:1px solid #7a7a7a;border-right-color:#4f7894;background:#fff"></div>
<div style="position:absolute;left:876px;top:181px;width:1px;height:483px;background:#ececec;"></div>
<div style="position:absolute;left:947px;top:181px;width:1px;height:483px;background:#ececec;"></div>
<div style="position:absolute;left:1096px;top:181px;width:1px;height:483px;background:#ececec;"></div>
<div style="position:absolute;left:1175px;top:181px;width:1px;height:483px;background:#ececec;"></div>
<div style="position:absolute;left:624px;top:205px;width:1px;height:459px;background:#e8eef6;"></div>
<svg style="position:absolute;left:747px;top:182px" width="8" height="5" viewBox="0 0 8 5"><path d="M0.8 4L4 0.8L7.2 4" stroke="#505050" stroke-width="1.2" fill="none"/></svg>
<div class="t" style="left:630.00px;top:187.00px;letter-spacing:-0.252px;">Name</div>
<div class="t" style="left:909.50px;top:187.00px;letter-spacing:-0.402px;">Größe</div>
<div class="t" style="left:953.00px;top:187.00px;letter-spacing:-0.254px;">Geändert</div>
<div class="t" style="left:1103.00px;top:187.00px;letter-spacing:-0.337px;">Rechte</div>
<div class="t" style="left:1182.00px;top:187.00px;letter-spacing:-0.418px;">Besitzer</div>
<svg style="position:absolute;left:629px;top:207px" width="13" height="16" viewBox="0 0 13 16"><rect x="0" y="0" width="13" height="16" fill="#f9e08c"/><rect x="0.3" y="0.3" width="12.4" height="15.4" fill="none" stroke="#f0d27a" stroke-width="0.6"/><rect x="10" y="9" width="3" height="7" fill="#f0cc5e"/><path d="M3.5 6.2l-3 3h2.1v3.8h6.4v-1.6h-4.7v-2.2h2.1z" fill="#3a3010"/></svg>
<div class="t" style="left:646.00px;top:209.00px;letter-spacing:-0.100px;">..</div>
<div class="t" style="left:953.00px;top:209.00px;letter-spacing:-0.637px;">27.06.2018 10:38:48</div>
<div class="t" style="left:1103.00px;top:209.00px;letter-spacing:-0.072px;">rwxr-xr-x</div>
<div class="t" style="left:1182.00px;top:209.00px;letter-spacing:-0.210px;">loxberry</div>
<svg style="position:absolute;left:629px;top:226px" width="16" height="16" viewBox="0 0 16 16"><path d="M0.5 0.5h8l3 3v12h-11z" fill="#fdfdfd" stroke="#7a7a7a"/><path d="M8.5 0.5v3h3" fill="#e8e8e8" stroke="#7a7a7a"/></svg>
<div class="t" style="left:646.00px;top:228.00px;letter-spacing:-0.162px;color:#787878;">.alexa.cookie</div>
<div class="t" style="left:916.11px;top:228.00px;letter-spacing:-0.780px;color:#787878;">2 KB</div>
<div class="t" style="left:953.00px;top:228.00px;letter-spacing:-0.637px;color:#787878;">27.06.2018 13:32:22</div>
<div class="t" style="left:1103.00px;top:228.00px;letter-spacing:0.263px;color:#787878;">rw-r--r--</div>
<div class="t" style="left:1182.00px;top:228.00px;letter-spacing:-0.210px;color:#787878;">loxberry</div>
<svg style="position:absolute;left:628px;top:246px" width="16" height="16" viewBox="0 0 16 16"><path d="M2.8 9V2.5" stroke="#1a1a1a" stroke-width="1.7"/><path d="M2 1.8h11.5" stroke="#1a1a1a" stroke-width="1.9"/><path d="M12.5 1.2h1.3v2h-1.3z" fill="#1a1a1a"/><path d="M10 2.5V12.5c0 .6-.3 1-1 1" stroke="#1a1a1a" stroke-width="1.9" fill="none"/><path d="M0.5 12.8h9" stroke="#1a1a1a" stroke-width="1.9"/><path d="M0.5 12h2v2h-2z" fill="#1a1a1a"/><rect x="3.7" y="2.8" width="5.4" height="9.2" fill="#fafafa"/></svg>
<div class="t" style="left:646.00px;top:247.00px;letter-spacing:-0.150px;color:#787878;">.alexa.devicelist.json</div>
<div class="t" style="left:916.11px;top:247.00px;letter-spacing:-0.780px;color:#787878;">6 KB</div>
<div class="t" style="left:953.00px;top:247.00px;letter-spacing:-0.637px;color:#787878;">27.06.2018 13:32:24</div>
<div class="t" style="left:1103.00px;top:247.00px;letter-spacing:0.263px;color:#787878;">rw-r--r--</div>
<div class="t" style="left:1182.00px;top:247.00px;letter-spacing:-0.210px;color:#787878;">loxberry</div>
<svg style="position:absolute;left:629px;top:264px" width="16" height="16" viewBox="0 0 16 16"><path d="M0.5 0.5h8l3 3v12h-11z" fill="#fdfdfd" stroke="#7a7a7a"/><path d="M8.5 0.5v3h3" fill="#e8e8e8" stroke="#7a7a7a"/></svg>
<div class="t" style="left:646.00px;top:266.00px;letter-spacing:-0.170px;color:#787878;">.alexa.header2</div>
<div class="t" style="left:916.11px;top:266.00px;letter-spacing:-0.780px;color:#787878;">4 KB</div>
<div class="t" style="left:953.00px;top:266.00px;letter-spacing:-0.637px;color:#787878;">27.06.2018 13:32:21</div>
<div class="t" style="left:1103.00px;top:266.00px;letter-spacing:0.263px;color:#787878;">rw-r--r--</div>
<div class="t" style="left:1182.00px;top:266.00px;letter-spacing:-0.210px;color:#787878;">loxberry</div>
<svg style="position:absolute;left:629px;top:283px" width="16" height="16" viewBox="0 0 16 16"><path d="M0.5 0.5h8l3 3v12h-11z" fill="#fdfdfd" stroke="#7a7a7a"/><path d="M8.5 0.5v3h3" fill="#e8e8e8" stroke="#7a7a7a"/></svg>
<div class="t" style="left:646.00px;top:285.00px;letter-spacing:-0.152px;color:#787878;">.alexa.login</div>
<div class="t" style="left:916.11px;top:285.00px;letter-spacing:-0.780px;color:#787878;">6 KB</div>
<div class="t" style="left:953.00px;top:285.00px;letter-spacing:-0.637px;color:#787878;">27.06.2018 13:32:21</div>
<div class="t" style="left:1103.00px;top:285.00px;letter-spacing:0.263px;color:#787878;">rw-r--r--</div>
<div class="t" style="left:1182.00px;top:285.00px;letter-spacing:-0.210px;color:#787878;">loxberry</div>
<svg style="position:absolute;left:627px;top:302px" width="16" height="16" viewBox="0 0 16 16"><path d="M0.5 0.5h9l3 3v12h-12z" fill="#fdfdfd" stroke="#555"/><path d="M9.5 0.5v3h3" fill="#e8e8e8" stroke="#666"/><g fill="#666"><rect x="2" y="2" width="1" height="1"/><rect x="4" y="2" width="1" height="1"/><rect x="6" y="2" width="1" height="1"/></g><linearGradient id="gg3" x1="0" y1="0" x2="0" y2="1"><stop offset="0" stop-color="#f2f8c8"/><stop offset="0.35" stop-color="#a8dc60"/><stop offset="0.8" stop-color="#50a830"/><stop offset="1" stop-color="#186818"/></linearGradient><rect x="2" y="5.5" width="9" height="8.5" fill="url(#gg3)"/><path d="M8.8 11.5L15.3 1.2" stroke="#7a5010" stroke-width="2.4"/><path d="M8.8 11.5L15.3 1.2" stroke="#e8b838" stroke-width="1.4"/><circle cx="15.5" cy="1" r="1" fill="#111"/></svg>
<div class="t" style="left:646.00px;top:304.00px;letter-spacing:-0.178px;">Alexa.php</div>
<div class="t" style="left:916.11px;top:304.00px;letter-spacing:-0.780px;">1 KB</div>
<div class="t" style="left:953.00px;top:304.00px;letter-spacing:-0.637px;">27.06.2018 09:07:55</div>
<div class="t" style="left:1103.00px;top:304.00px;letter-spacing:-0.072px;">rwxr-xr-x</div>
<div class="t" style="left:1182.00px;top:304.00px;letter-spacing:-0.210px;">loxberry</div>
<div style="position:absolute;left:627px;top:319px;width:248px;height:19px;background:#d9d9d9;"></div>
<svg style="position:absolute;left:627px;top:321px" width="16" height="16" viewBox="0 0 16 16"><path d="M0.5 0.5h9l3 3v12h-12z" fill="#fdfdfd" stroke="#555"/><path d="M9.5 0.5v3h3" fill="#e8e8e8" stroke="#666"/><g fill="#666"><rect x="2" y="2" width="1" height="1"/><rect x="4" y="2" width="1" height="1"/><rect x="6" y="2" width="1" height="1"/></g><linearGradient id="gg3" x1="0" y1="0" x2="0" y2="1"><stop offset="0" stop-color="#f2f8c8"/><stop offset="0.35" stop-color="#a8dc60"/><stop offset="0.8" stop-color="#50a830"/><stop offset="1" stop-color="#186818"/></linearGradient><rect x="2" y="5.5" width="9" height="8.5" fill="url(#gg3)"/><path d="M8.8 11.5L15.3 1.2" stroke="#7a5010" stroke-width="2.4"/><path d="M8.8 11.5L15.3 1.2" stroke="#e8b838" stroke-width="1.4"/><circle cx="15.5" cy="1" r="1" fill="#111"/></svg>
<div class="t" style="left:646.00px;top:323.00px;letter-spacing:-0.171px;">alexa_remote_control.sh</div>
<div class="t" style="left:910.23px;top:323.00px;letter-spacing:-0.785px;">42 KB</div>
<div class="t" style="left:953.00px;top:323.00px;letter-spacing:-0.637px;">27.06.2018 13:22:06</div>
<div class="t" style="left:1103.00px;top:323.00px;letter-spacing:-0.072px;">rwxr-xr-x</div>
<div class="t" style="left:1182.00px;top:323.00px;letter-spacing:-0.210px;">loxberry</div>
<svg style="position:absolute;left:629px;top:340px" width="16" height="16" viewBox="0 0 16 16"><path d="M0.5 0.5h8l3 3v12h-11z" fill="#fdfdfd" stroke="#7a7a7a"/><path d="M8.5 0.5v3h3" fill="#e8e8e8" stroke="#7a7a7a"/><path d="M2.5 3.5h4M2.5 5.5h7M2.5 7.5h7M2.5 9.5h7M2.5 11.5h7M2.5 13.5h7" stroke="#8a8a8a"/></svg>
<div class="t" style="left:646.00px;top:342.00px;letter-spacing:-0.176px;">amazon.txt</div>
<div class="t" style="left:916.11px;top:342.00px;letter-spacing:-0.780px;">1 KB</div>
<div class="t" style="left:953.00px;top:342.00px;letter-spacing:-0.637px;">27.06.2018 13:17:51</div>
<div class="t" style="left:1103.00px;top:342.00px;letter-spacing:0.263px;">rw-r--r--</div>
<div class="t" style="left:1182.00px;top:342.00px;letter-spacing:-0.210px;">loxberry</div>
<svg style="position:absolute;left:627px;top:359px" width="16" height="16" viewBox="0 0 16 16"><path d="M0.5 0.5h9l3 3v12h-12z" fill="#fdfdfd" stroke="#555"/><path d="M9.5 0.5v3h3" fill="#e8e8e8" stroke="#666"/><g fill="#666"><rect x="2" y="2" width="1" height="1"/><rect x="4" y="2" width="1" height="1"/><rect x="6" y="2" width="1" height="1"/></g><linearGradient id="gg3" x1="0" y1="0" x2="0" y2="1"><stop offset="0" stop-color="#f2f8c8"/><stop offset="0.35" stop-color="#a8dc60"/><stop offset="0.8" stop-color="#50a830"/><stop offset="1" stop-color="#186818"/></linearGradient><rect x="2" y="5.5" width="9" height="8.5" fill="url(#gg3)"/><path d="M8.8 11.5L15.3 1.2" stroke="#7a5010" stroke-width="2.4"/><path d="M8.8 11.5L15.3 1.2" stroke="#e8b838" stroke-width="1.4"/><circle cx="15.5" cy="1" r="1" fill="#111"/></svg>
<div class="t" style="left:646.00px;top:361.00px;letter-spacing:-0.156px;">bt.sh</div>
<div class="t" style="left:916.11px;top:361.00px;letter-spacing:-0.780px;">1 KB</div>
<div class="t" style="left:953.00px;top:361.00px;letter-spacing:-0.637px;">27.06.2018 09:07:55</div>
<div class="t" style="left:1103.00px;top:361.00px;letter-spacing:-0.072px;">rwxr-xr-x</div>
<div class="t" style="left:1182.00px;top:361.00px;letter-spacing:-0.210px;">loxberry</div>
<svg style="position:absolute;left:627px;top:378px" width="16" height="16" viewBox="0 0 16 16"><path d="M0.5 0.5h9l3 3v12h-12z" fill="#fdfdfd" stroke="#555"/><path d="M9.5 0.5v3h3" fill="#e8e8e8" stroke="#666"/><g fill="#666"><rect x="2" y="2" width="1" height="1"/><rect x="4" y="2" width="1" height="1"/><rect x="6" y="2" width="1" height="1"/></g><linearGradient id="gg3" x1="0" y1="0" x2="0" y2="1"><stop offset="0" stop-color="#f2f8c8"/><stop offset="0.35" stop-color="#a8dc60"/><stop offset="0.8" stop-color="#50a830"/><stop offset="1" stop-color="#186818"/></linearGradient><rect x="2" y="5.5" width="9" height="8.5" fill="url(#gg3)"/><path d="M8.8 11.5L15.3 1.2" stroke="#7a5010" stroke-width="2.4"/><path d="M8.8 11.5L15.3 1.2" stroke="#e8b838" stroke-width="1.4"/><circle cx="15.5" cy="1" r="1" fill="#111"/></svg>
<div class="t" style="left:646.00px;top:380.00px;letter-spacing:-0.185px;">Daten.php</div>
<div class="t" style="left:916.11px;top:380.00px;letter-spacing:-0.780px;">2 KB</div>
<div class="t" style="left:953.00px;top:380.00px;letter-spacing:-0.637px;">27.06.2018 09:07:55</div>
<div class="t" style="left:1103.00px;top:380.00px;letter-spacing:-0.072px;">rwxr-xr-x</div>
<div class="t" style="left:1182.00px;top:380.00px;letter-spacing:-0.210px;">loxberry</div>
<svg style="position:absolute;left:627px;top:397px" width="16" height="16" viewBox="0 0 16 16"><path d="M0.5 0.5h9l3 3v12h-12z" fill="#fdfdfd" stroke="#555"/><path d="M9.5 0.5v3h3" fill="#e8e8e8" stroke="#666"/><g fill="#666"><rect x="2" y="2" width="1" height="1"/><rect x="4" y="2" width="1" height="1"/><rect x="6" y="2" width="1" height="1"/></g><linearGradient id="gg3" x1="0" y1="0" x2="0" y2="1"><stop offset="0" stop-color="#f2f8c8"/><stop offset="0.35" stop-color="#a8dc60"/><stop offset="0.8" stop-color="#50a830"/><stop offset="1" stop-color="#186818"/></linearGradient><rect x="2" y="5.5" width="9" height="8.5" fill="url(#gg3)"/><path d="M8.8 11.5L15.3 1.2" stroke="#7a5010" stroke-width="2.4"/><path d="M8.8 11.5L15.3 1.2" stroke="#e8b838" stroke-width="1.4"/><circle cx="15.5" cy="1" r="1" fill="#111"/></svg>
<div class="t" style="left:646.00px;top:399.00px;letter-spacing:-0.173px;">daten.sh</div>
<div class="t" style="left:916.11px;top:399.00px;letter-spacing:-0.780px;">1 KB</div>
<div class="t" style="left:953.00px;top:399.00px;letter-spacing:-0.637px;">27.06.2018 09:07:55</div>
<div class="t" style="left:1103.00px;top:399.00px;letter-spacing:-0.072px;">rwxr-xr-x</div>
<div class="t" style="left:1182.00px;top:399.00px;letter-spacing:-0.210px;">loxberry</div>
<svg style="position:absolute;left:627px;top:416px" width="16" height="16" viewBox="0 0 16 16"><path d="M0.5 0.5h9l3 3v12h-12z" fill="#fdfdfd" stroke="#555"/><path d="M9.5 0.5v3h3" fill="#e8e8e8" stroke="#666"/><g fill="#666"><rect x="2" y="2" width="1" height="1"/><rect x="4" y="2" width="1" height="1"/><rect x="6" y="2" width="1" height="1"/></g><linearGradient id="gg3" x1="0" y1="0" x2="0" y2="1"><stop offset="0" stop-color="#f2f8c8"/><stop offset="0.35" stop-color="#a8dc60"/><stop offset="0.8" stop-color="#50a830"/><stop offset="1" stop-color="#186818"/></linearGradient><rect x="2" y="5.5" width="9" height="8.5" fill="url(#gg3)"/><path d="M8.8 11.5L15.3 1.2" stroke="#7a5010" stroke-width="2.4"/><path d="M8.8 11.5L15.3 1.2" stroke="#e8b838" stroke-width="1.4"/><circle cx="15.5" cy="1" r="1" fill="#111"/></svg>
<div class="t" style="left:646.00px;top:418.00px;letter-spacing:-0.178px;">DatenWrite.php</div>
<div class="t" style="left:916.11px;top:418.00px;letter-spacing:-0.780px;">2 KB</div>
<div class="t" style="left:953.00px;top:418.00px;letter-spacing:-0.637px;">27.06.2018 09:07:55</div>
<div class="t" style="left:1103.00px;top:418.00px;letter-spacing:-0.072px;">rwxr-xr-x</div>
<div class="t" style="left:1182.00px;top:418.00px;letter-spacing:-0.210px;">loxberry</div>
<svg style="position:absolute;left:627px;top:435px" width="16" height="16" viewBox="0 0 16 16"><path d="M0.5 0.5h9l3 3v12h-12z" fill="#fdfdfd" stroke="#555"/><path d="M9.5 0.5v3h3" fill="#e8e8e8" stroke="#666"/><g fill="#666"><rect x="2" y="2" width="1" height="1"/><rect x="4" y="2" width="1" height="1"/><rect x="6" y="2" width="1" height="1"/></g><linearGradient id="gg3" x1="0" y1="0" x2="0" y2="1"><stop offset="0" stop-color="#f2f8c8"/><stop offset="0.35" stop-color="#a8dc60"/><stop offset="0.8" stop-color="#50a830"/><stop offset="1" stop-color="#186818"/></linearGradient><rect x="2" y="5.5" width="9" height="8.5" fill="url(#gg3)"/><path d="M8.8 11.5L15.3 1.2" stroke="#7a5010" stroke-width="2.4"/><path d="M8.8 11.5L15.3 1.2" stroke="#e8b838" stroke-width="1.4"/><circle cx="15.5" cy="1" r="1" fill="#111"/></svg>
<div class="t" style="left:646.00px;top:437.00px;letter-spacing:-0.160px;">del.sh</div>
<div class="t" style="left:916.11px;top:437.00px;letter-spacing:-0.780px;">1 KB</div>
<div class="t" style="left:953.00px;top:437.00px;letter-spacing:-0.637px;">27.06.2018 09:07:55</div>
<div class="t" style="left:1103.00px;top:437.00px;letter-spacing:-0.072px;">rwxr-xr-x</div>
<div class="t" style="left:1182.00px;top:437.00px;letter-spacing:-0.210px;">loxberry</div>
<svg style="position:absolute;left:627px;top:454px" width="16" height="16" viewBox="0 0 16 16"><path d="M0.5 0.5h9l3 3v12h-12z" fill="#fdfdfd" stroke="#555"/><path d="M9.5 0.5v3h3" fill="#e8e8e8" stroke="#666"/><g fill="#666"><rect x="2" y="2" width="1" height="1"/><rect x="4" y="2" width="1" height="1"/><rect x="6" y="2" width="1" height="1"/></g><linearGradient id="gg3" x1="0" y1="0" x2="0" y2="1"><stop offset="0" stop-color="#f2f8c8"/><stop offset="0.35" stop-color="#a8dc60"/><stop offset="0.8" stop-color="#50a830"/><stop offset="1" stop-color="#186818"/></linearGradient><rect x="2" y="5.5" width="9" height="8.5" fill="url(#gg3)"/><path d="M8.8 11.5L15.3 1.2" stroke="#7a5010" stroke-width="2.4"/><path d="M8.8 11.5L15.3 1.2" stroke="#e8b838" stroke-width="1.4"/><circle cx="15.5" cy="1" r="1" fill="#111"/></svg>
<div class="t" style="left:646.00px;top:456.00px;letter-spacing:-0.158px;">index.cgi</div>
<div class="t" style="left:916.11px;top:456.00px;letter-spacing:-0.780px;">3 KB</div>
<div class="t" style="left:953.00px;top:456.00px;letter-spacing:-0.637px;">27.06.2018 09:07:55</div>
<div class="t" style="left:1103.00px;top:456.00px;letter-spacing:-0.072px;">rwxr-xr-x</div>
<div class="t" style="left:1182.00px;top:456.00px;letter-spacing:-0.210px;">loxberry</div>
<svg style="position:absolute;left:627px;top:473px" width="16" height="16" viewBox="0 0 16 16"><path d="M0.5 0.5h9l3 3v12h-12z" fill="#fdfdfd" stroke="#555"/><path d="M9.5 0.5v3h3" fill="#e8e8e8" stroke="#666"/><g fill="#666"><rect x="2" y="2" width="1" height="1"/><rect x="4" y="2" width="1" height="1"/><rect x="6" y="2" width="1" height="1"/></g><linearGradient id="gg3" x1="0" y1="0" x2="0" y2="1"><stop offset="0" stop-color="#f2f8c8"/><stop offset="0.35" stop-color="#a8dc60"/><stop offset="0.8" stop-color="#50a830"/><stop offset="1" stop-color="#186818"/></linearGradient><rect x="2" y="5.5" width="9" height="8.5" fill="url(#gg3)"/><path d="M8.8 11.5L15.3 1.2" stroke="#7a5010" stroke-width="2.4"/><path d="M8.8 11.5L15.3 1.2" stroke="#e8b838" stroke-width="1.4"/><circle cx="15.5" cy="1" r="1" fill="#111"/></svg>
<div class="t" style="left:646.00px;top:475.00px;letter-spacing:-0.176px;">Index.php</div>
<div class="t" style="left:916.11px;top:475.00px;letter-spacing:-0.780px;">5 KB</div>
<div class="t" style="left:953.00px;top:475.00px;letter-spacing:-0.637px;">27.06.2018 09:07:55</div>
<div class="t" style="left:1103.00px;top:475.00px;letter-spacing:-0.072px;">rwxr-xr-x</div>
<div class="t" style="left:1182.00px;top:475.00px;letter-spacing:-0.210px;">loxberry</div>
<svg style="position:absolute;left:627px;top:492px" width="16" height="16" viewBox="0 0 16 16"><path d="M0.5 0.5h9l3 3v12h-12z" fill="#fdfdfd" stroke="#555"/><path d="M9.5 0.5v3h3" fill="#e8e8e8" stroke="#666"/><g fill="#666"><rect x="2" y="2" width="1" height="1"/><rect x="4" y="2" width="1" height="1"/><rect x="6" y="2" width="1" height="1"/></g><linearGradient id="gg3" x1="0" y1="0" x2="0" y2="1"><stop offset="0" stop-color="#f2f8c8"/><stop offset="0.35" stop-color="#a8dc60"/><stop offset="0.8" stop-color="#50a830"/><stop offset="1" stop-color="#186818"/></linearGradient><rect x="2" y="5.5" width="9" height="8.5" fill="url(#gg3)"/><path d="M8.8 11.5L15.3 1.2" stroke="#7a5010" stroke-width="2.4"/><path d="M8.8 11.5L15.3 1.2" stroke="#e8b838" stroke-width="1.4"/><circle cx="15.5" cy="1" r="1" fill="#111"/></svg>
<div class="t" style="left:646.00px;top:494.00px;letter-spacing:-0.176px;">LoxWrite.php</div>
<div class="t" style="left:916.11px;top:494.00px;letter-spacing:-0.780px;">2 KB</div>
<div class="t" style="left:953.00px;top:494.00px;letter-spacing:-0.637px;">27.06.2018 09:07:55</div>
<div class="t" style="left:1103.00px;top:494.00px;letter-spacing:-0.072px;">rwxr-xr-x</div>
<div class="t" style="left:1182.00px;top:494.00px;letter-spacing:-0.210px;">loxberry</div>
<svg style="position:absolute;left:627px;top:511px" width="16" height="16" viewBox="0 0 16 16"><path d="M0.5 0.5h9l3 3v12h-12z" fill="#fdfdfd" stroke="#555"/><path d="M9.5 0.5v3h3" fill="#e8e8e8" stroke="#666"/><g fill="#666"><rect x="2" y="2" width="1" height="1"/><rect x="4" y="2" width="1" height="1"/><rect x="6" y="2" width="1" height="1"/></g><linearGradient id="gg3" x1="0" y1="0" x2="0" y2="1"><stop offset="0" stop-color="#f2f8c8"/><stop offset="0.35" stop-color="#a8dc60"/><stop offset="0.8" stop-color="#50a830"/><stop offset="1" stop-color="#186818"/></linearGradient><rect x="2" y="5.5" width="9" height="8.5" fill="url(#gg3)"/><path d="M8.8 11.5L15.3 1.2" stroke="#7a5010" stroke-width="2.4"/><path d="M8.8 11.5L15.3 1.2" stroke="#e8b838" stroke-width="1.4"/><circle cx="15.5" cy="1" r="1" fill="#111"/></svg>
<div class="t" style="left:646.00px;top:513.00px;letter-spacing:-0.170px;">switch.php</div>
<div class="t" style="left:916.11px;top:513.00px;letter-spacing:-0.780px;">1 KB</div>
<div class="t" style="left:953.00px;top:513.00px;letter-spacing:-0.637px;">27.06.2018 09:07:55</div>
<div class="t" style="left:1103.00px;top:513.00px;letter-spacing:-0.072px;">rwxr-xr-x</div>
<div class="t" style="left:1182.00px;top:513.00px;letter-spacing:-0.210px;">loxberry</div>
<svg style="position:absolute;left:627px;top:530px" width="16" height="16" viewBox="0 0 16 16"><path d="M0.5 0.5h9l3 3v12h-12z" fill="#fdfdfd" stroke="#555"/><path d="M9.5 0.5v3h3" fill="#e8e8e8" stroke="#666"/><g fill="#666"><rect x="2" y="2" width="1" height="1"/><rect x="4" y="2" width="1" height="1"/><rect x="6" y="2" width="1" height="1"/></g><linearGradient id="gg3" x1="0" y1="0" x2="0" y2="1"><stop offset="0" stop-color="#f2f8c8"/><stop offset="0.35" stop-color="#a8dc60"/><stop offset="0.8" stop-color="#50a830"/><stop offset="1" stop-color="#186818"/></linearGradient><rect x="2" y="5.5" width="9" height="8.5" fill="url(#gg3)"/><path d="M8.8 11.5L15.3 1.2" stroke="#7a5010" stroke-width="2.4"/><path d="M8.8 11.5L15.3 1.2" stroke="#e8b838" stroke-width="1.4"/><circle cx="15.5" cy="1" r="1" fill="#111"/></svg>
<div class="t" style="left:646.00px;top:532.00px;letter-spacing:-0.175px;">switch_2.php</div>
<div class="t" style="left:916.11px;top:532.00px;letter-spacing:-0.780px;">1 KB</div>
<div class="t" style="left:953.00px;top:532.00px;letter-spacing:-0.637px;">27.06.2018 09:07:55</div>
<div class="t" style="left:1103.00px;top:532.00px;letter-spacing:-0.072px;">rwxr-xr-x</div>
<div class="t" style="left:1182.00px;top:532.00px;letter-spacing:-0.210px;">loxberry</div>
<svg style="position:absolute;left:627px;top:549px" width="16" height="16" viewBox="0 0 16 16"><path d="M0.5 0.5h9l3 3v12h-12z" fill="#fdfdfd" stroke="#555"/><path d="M9.5 0.5v3h3" fill="#e8e8e8" stroke="#666"/><g fill="#666"><rect x="2" y="2" width="1" height="1"/><rect x="4" y="2" width="1" height="1"/><rect x="6" y="2" width="1" height="1"/></g><linearGradient id="gg3" x1="0" y1="0" x2="0" y2="1"><stop offset="0" stop-color="#f2f8c8"/><stop offset="0.35" stop-color="#a8dc60"/><stop offset="0.8" stop-color="#50a830"/><stop offset="1" stop-color="#186818"/></linearGradient><rect x="2" y="5.5" width="9" height="8.5" fill="url(#gg3)"/><path d="M8.8 11.5L15.3 1.2" stroke="#7a5010" stroke-width="2.4"/><path d="M8.8 11.5L15.3 1.2" stroke="#e8b838" stroke-width="1.4"/><circle cx="15.5" cy="1" r="1" fill="#111"/></svg>
<div class="t" style="left:646.00px;top:551.00px;letter-spacing:-0.173px;">switch1.php</div>
<div class="t" style="left:916.11px;top:551.00px;letter-spacing:-0.780px;">1 KB</div>
<div class="t" style="left:953.00px;top:551.00px;letter-spacing:-0.637px;">27.06.2018 09:07:55</div>
<div class="t" style="left:1103.00px;top:551.00px;letter-spacing:-0.072px;">rwxr-xr-x</div>
<div class="t" style="left:1182.00px;top:551.00px;letter-spacing:-0.210px;">loxberry</div>
<svg style="position:absolute;left:627px;top:568px" width="16" height="16" viewBox="0 0 16 16"><path d="M0.5 0.5h9l3 3v12h-12z" fill="#fdfdfd" stroke="#555"/><path d="M9.5 0.5v3h3" fill="#e8e8e8" stroke="#666"/><g fill="#666"><rect x="2" y="2" width="1" height="1"/><rect x="4" y="2" width="1" height="1"/><rect x="6" y="2" width="1" height="1"/></g><linearGradient id="gg3" x1="0" y1="0" x2="0" y2="1"><stop offset="0" stop-color="#f2f8c8"/><stop offset="0.35" stop-color="#a8dc60"/><stop offset="0.8" stop-color="#50a830"/><stop offset="1" stop-color="#186818"/></linearGradient><rect x="2" y="5.5" width="9" height="8.5" fill="url(#gg3)"/><path d="M8.8 11.5L15.3 1.2" stroke="#7a5010" stroke-width="2.4"/><path d="M8.8 11.5L15.3 1.2" stroke="#e8b838" stroke-width="1.4"/><circle cx="15.5" cy="1" r="1" fill="#111"/></svg>
<div class="t" style="left:646.00px;top:570.00px;letter-spacing:-0.154px;">tts.php</div>
<div class="t" style="left:916.11px;top:570.00px;letter-spacing:-0.780px;">3 KB</div>
<div class="t" style="left:953.00px;top:570.00px;letter-spacing:-0.637px;">27.06.2018 09:07:55</div>
<div class="t" style="left:1103.00px;top:570.00px;letter-spacing:-0.072px;">rwxr-xr-x</div>
<div class="t" style="left:1182.00px;top:570.00px;letter-spacing:-0.210px;">loxberry</div>
<svg style="position:absolute;left:629px;top:587px" width="16" height="16" viewBox="0 0 16 16"><path d="M0.5 0.5h8l3 3v12h-11z" fill="#fdfdfd" stroke="#7a7a7a"/><path d="M8.5 0.5v3h3" fill="#e8e8e8" stroke="#7a7a7a"/><path d="M2.5 3.5h4M2.5 5.5h7M2.5 7.5h7M2.5 9.5h7M2.5 11.5h7M2.5 13.5h7" stroke="#8a8a8a"/></svg>
<div class="t" style="left:646.00px;top:589.00px;letter-spacing:-0.123px;">tts.txt</div>
<div class="t" style="left:916.11px;top:589.00px;letter-spacing:-0.780px;">1 KB</div>
<div class="t" style="left:953.00px;top:589.00px;letter-spacing:-0.637px;">27.06.2018 09:07:55</div>
<div class="t" style="left:1103.00px;top:589.00px;letter-spacing:-0.072px;">rwxr-xr-x</div>
<div class="t" style="left:1182.00px;top:589.00px;letter-spacing:-0.210px;">loxberry</div>
<svg style="position:absolute;left:629px;top:606px" width="16" height="16" viewBox="0 0 16 16"><path d="M0.5 0.5h8l3 3v12h-11z" fill="#fdfdfd" stroke="#7a7a7a"/><path d="M8.5 0.5v3h3" fill="#e8e8e8" stroke="#7a7a7a"/><path d="M2.5 3.5h4M2.5 5.5h7M2.5 7.5h7M2.5 9.5h7M2.5 11.5h7M2.5 13.5h7" stroke="#8a8a8a"/></svg>
<div class="t" style="left:646.00px;top:608.00px;letter-spacing:-0.150px;">Vers.txt</div>
<div class="t" style="left:916.11px;top:608.00px;letter-spacing:-0.780px;">1 KB</div>
<div class="t" style="left:953.00px;top:608.00px;letter-spacing:-0.637px;">27.06.2018 09:07:55</div>
<div class="t" style="left:1103.00px;top:608.00px;letter-spacing:-0.072px;">rwxr-xr-x</div>
<div class="t" style="left:1182.00px;top:608.00px;letter-spacing:-0.210px;">loxberry</div>
<svg style="position:absolute;left:627px;top:625px" width="16" height="16" viewBox="0 0 16 16"><path d="M0.5 0.5h9l3 3v12h-12z" fill="#fdfdfd" stroke="#555"/><path d="M9.5 0.5v3h3" fill="#e8e8e8" stroke="#666"/><g fill="#666"><rect x="2" y="2" width="1" height="1"/><rect x="4" y="2" width="1" height="1"/><rect x="6" y="2" width="1" height="1"/></g><linearGradient id="gg3" x1="0" y1="0" x2="0" y2="1"><stop offset="0" stop-color="#f2f8c8"/><stop offset="0.35" stop-color="#a8dc60"/><stop offset="0.8" stop-color="#50a830"/><stop offset="1" stop-color="#186818"/></linearGradient><rect x="2" y="5.5" width="9" height="8.5" fill="url(#gg3)"/><path d="M8.8 11.5L15.3 1.2" stroke="#7a5010" stroke-width="2.4"/><path d="M8.8 11.5L15.3 1.2" stroke="#e8b838" stroke-width="1.4"/><circle cx="15.5" cy="1" r="1" fill="#111"/></svg>
<div class="t" style="left:646.00px;top:627.00px;letter-spacing:-0.167px;">voicers.php</div>
<div class="t" style="left:916.11px;top:627.00px;letter-spacing:-0.780px;">1 KB</div>
<div class="t" style="left:953.00px;top:627.00px;letter-spacing:-0.637px;">27.06.2018 09:07:55</div>
<div class="t" style="left:1103.00px;top:627.00px;letter-spacing:-0.072px;">rwxr-xr-x</div>
<div class="t" style="left:1182.00px;top:627.00px;letter-spacing:-0.210px;">loxberry</div>
<div style="position:absolute;left:622px;top:665px;width:614px;height:17px;background:#f0f0f0;"></div>
<div style="position:absolute;left:640px;top:666px;width:575px;height:15px;background:#cdcdcd;"></div>
<svg style="position:absolute;left:627px;top:670px" width="7" height="7" viewBox="0 0 7 7"><path d="M5.5 0.6L1.5 3.5L5.5 6.4" stroke="#404040" stroke-width="2.1" fill="none"/></svg>
<svg style="position:absolute;left:1223px;top:670px" width="7" height="7" viewBox="0 0 7 7"><path d="M1.5 0.6L5.5 3.5L1.5 6.4" stroke="#404040" stroke-width="2.1" fill="none"/></svg>
<div class="t" style="left:4.00px;top:689.00px;letter-spacing:-0.311px;">0 B von 41,6 KB in 0 von 1</div>
<div class="t" style="left:624.00px;top:689.00px;letter-spacing:-0.370px;">41,6 KB von 74,8 KB in 1 von 22</div>
<div style="position:absolute;left:1px;top:707px;width:1236px;height:1px;background:#dadada;"></div>
<div style="position:absolute;left:1014px;top:708px;width:1px;height:19px;background:#dadada;"></div>
<div style="position:absolute;left:1017px;top:708px;width:1px;height:19px;background:#dadada;"></div>
<div style="position:absolute;left:1049px;top:708px;width:1px;height:19px;background:#dadada;"></div>
<div style="position:absolute;left:1052px;top:708px;width:1px;height:19px;background:#dadada;"></div>
<div style="position:absolute;left:1119px;top:708px;width:1px;height:19px;background:#dadada;"></div>
<div style="position:absolute;left:1122px;top:708px;width:1px;height:19px;background:#dadada;"></div>
<div style="position:absolute;left:1154px;top:708px;width:1px;height:19px;background:#dadada;"></div>
<div style="position:absolute;left:1157px;top:708px;width:1px;height:19px;background:#dadada;"></div>
<svg style="position:absolute;left:1026px;top:709px" width="16" height="16" viewBox="0 0 16 16"><path d="M3 8.5V5.5a4 4 0 0 1 8 0v3" stroke="#a07810" stroke-width="2.4" fill="none"/><path d="M3 8.5V5.5a4 4 0 0 1 8 0v3" stroke="#f0c850" stroke-width="0.9" fill="none"/><rect x="0.5" y="7.5" width="13" height="8" rx="0.8" fill="url(#glock)" stroke="#a07810"/><path d="M1 9.5h12M1 11.5h12M1 13.5h12" stroke="#e8b830" stroke-width="0.6"/><rect x="6" y="10.5" width="2" height="2.5" fill="#3a2800"/></svg>
<div class="t" style="left:1067.00px;top:710.00px;letter-spacing:-0.723px;">SFTP-3</div>
<svg style="position:absolute;left:1130px;top:709px" width="14" height="16" viewBox="0 0 14 16"><rect x="0.5" y="0.5" width="11" height="8" fill="#e8e8e8" stroke="#a8a8a8"/><path d="M2 2.5h8M2 4.5h8M2 6.5h8" stroke="#b8b8b8"/><rect x="9.5" y="0.5" width="4" height="10" fill="#d4d4d4" stroke="#a8a8a8"/><path d="M7 9v4M3 13.5h9" stroke="#a8a8a8"/><circle cx="7" cy="13.5" r="1.5" fill="#b0b0b0"/></svg>
<div class="t" style="left:1178.00px;top:710.00px;letter-spacing:-0.577px;">4:23:57</div>
<svg style="position:absolute;left:1224px;top:714px" width="12" height="12" viewBox="0 0 12 12"><g fill="#b8b8b8"><rect x="9" y="1" width="2" height="2"/><rect x="6" y="4" width="2" height="2"/><rect x="9" y="4" width="2" height="2"/><rect x="3" y="7" width="2" height="2"/><rect x="6" y="7" width="2" height="2"/><rect x="9" y="7" width="2" height="2"/></g></svg>
<div style="position:absolute;left:0;top:0;width:1236px;height:726px;border:1px solid #3b7096;pointer-events:none"></div>
</body></html>
